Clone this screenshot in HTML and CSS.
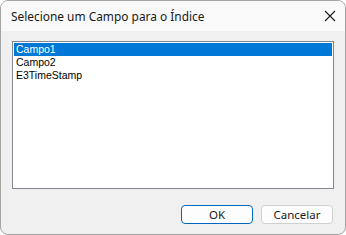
FILE: index.html
```html
<!DOCTYPE html>
<html>
<head>
<meta charset="utf-8">
<link rel="stylesheet" href="styles.css">
</head>
<body>
<div class="window">
  <div class="titlebar">
    <span class="title">Selecione um Campo para o Índice</span>
    <span class="close">
      <svg width="12" height="12" viewBox="0 0 12 12"><path d="M1 1 L11 11 M11 1 L1 11" stroke="#1a1a1a" stroke-width="1.1" fill="none"/></svg>
    </span>
  </div>
  <div class="content">
    <div class="listbox">
      <div class="item selected">Campo1</div>
      <div class="item">Campo2</div>
      <div class="item">E3TimeStamp</div>
    </div>
    <div class="buttons">
      <button class="btn default">OK</button>
      <button class="btn">Cancelar</button>
    </div>
  </div>
</div>
</body>
</html>
```
FILE: styles.css
```css
html, body {
  margin: 0;
  padding: 0;
  background: #ffffff;
}
.window {
  width: 346px;
  height: 235px;
  box-sizing: border-box;
  border: 1px solid #a3a3a3;
  border-radius: 8px;
  overflow: hidden;
  background: #f0f0f0;
  display: flex;
  flex-direction: column;
}
.titlebar {
  height: 30px;
  background: #f9f9f9;
  display: flex;
  align-items: center;
  justify-content: space-between;
  padding-left: 10px;
  padding-right: 8px;
  flex-shrink: 0;
}
.title {
  font-family: "Noto Sans", sans-serif;
  font-size: 11.9px;
  color: #1a1a1a;
}
.close {
  display: flex;
  width: 12px;
  height: 12px;
  margin-right: 1px;
}
.content {
  flex: 1;
  padding: 10px 11px 0 11px;
  display: flex;
  flex-direction: column;
}
.listbox {
  height: 148px;
  box-sizing: border-box;
  border: 1px solid #828790;
  background: #ffffff;
  padding: 1px;
  font-family: "Liberation Sans", Arial, sans-serif;
  font-size: 10.5px;
  color: #000000;
}
.item {
  height: 13px;
  line-height: 13px;
  padding-left: 2px;
  white-space: nowrap;
}
.item.selected {
  background: #0078d7;
  color: #ffffff;
}
.buttons {
  display: flex;
  justify-content: flex-end;
  gap: 8px;
  margin-top: 16px;
  padding-right: 1px;
}
.btn {
  width: 72px;
  height: 19px;
  box-sizing: border-box;
  border: 1px solid #d0d0d0;
  border-radius: 4px;
  background: #fdfdfd;
  font-family: "Noto Sans", sans-serif;
  font-size: 11.5px;
  color: #1a1a1a;
  padding: 0;
  line-height: 17px;
}
.btn.default {
  border-color: #0067c0;
}
```
